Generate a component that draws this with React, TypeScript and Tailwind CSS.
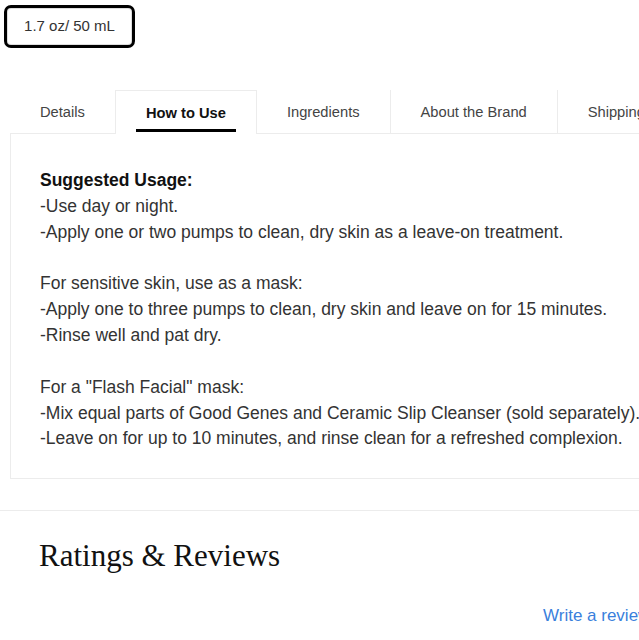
import React from "react";

const tabs = ["Details", "How to Use", "Ingredients", "About the Brand", "Shipping & Returns"];
const active = 1;

const blocks: { head: string; bold?: boolean; lines: string[] }[] = [
  {
    head: "Suggested Usage:",
    bold: true,
    lines: ["-Use day or night.", "-Apply one or two pumps to clean, dry skin as a leave-on treatment."],
  },
  {
    head: "For sensitive skin, use as a mask:",
    lines: ["-Apply one to three pumps to clean, dry skin and leave on for 15 minutes.", "-Rinse well and pat dry."],
  },
  {
    head: 'For a "Flash Facial" mask:',
    lines: [
      "-Mix equal parts of Good Genes and Ceramic Slip Cleanser (sold separately).",
      "-Leave on for up to 10 minutes, and rinse clean for a refreshed complexion.",
    ],
  },
];

export default function App() {
  return (
    <div className="w-[639px] h-[640px] overflow-hidden bg-white font-['Liberation_Sans',Arial,sans-serif] text-[#333]">
      <div className="w-[800px]">
        <div className="pl-[4px] pt-[5px]">
          <button className="h-[43px] w-[131px] rounded-[7px] border-[3px] border-black bg-white text-[15px] text-[#333] shadow-[inset_0_0_0_1px_#ddd]">
            1.7 oz/ 50 mL
          </button>
        </div>

        <div className="ml-[10px] mt-[42px] w-[760px]">
          <div className="flex h-[44px]">
            {tabs.map((t, i) => (
              <div
                key={t}
                className={
                  i === active
                    ? "relative flex items-center border-x border-t border-[#ececec] bg-white px-[30px] pt-[2px] text-[14.7px] font-bold text-[#111]"
                    : i === 0 || i === active + 1
                    ? "flex items-center border-b border-[#ececec] px-[30px] pt-[2px] text-[14.7px] text-[#444]"
                    : "flex items-center border-b border-l border-[#ececec] px-[30px] pt-[2px] text-[14.7px] text-[#444]"
                }
              >
                <span className="whitespace-nowrap">{t}</span>
                {i === active && (
                  <span className="absolute bottom-[2px] left-[20px] right-[20px] h-[3px] bg-black" />
                )}
              </div>
            ))}
            <div className="flex-1 border-b border-[#ececec]" />
          </div>

          <div className="h-[345px] border-x border-b border-[#ececec] pl-[29px] pt-[34px] text-[17.5px] leading-[25.8px]">
            {blocks.map((b, i) => (
              <div key={i} className={i > 0 ? "mt-[26px]" : ""}>
                <div className={b.bold ? "font-bold text-[#111]" : ""}>{b.head}</div>
                {b.lines.map((l) => (
                  <div key={l} className="whitespace-nowrap">
                    {l}
                  </div>
                ))}
              </div>
            ))}
          </div>
        </div>

        <div className="mt-[31px] border-t border-[#ececec]">
          <h2 className="pl-[39px] pt-[27px] font-['Liberation_Serif',Georgia,serif] text-[31px] leading-[36px] text-[#111]">
            Ratings &amp; Reviews
          </h2>
          <div className="mt-[29px] w-[639px] pl-[543px] text-[17px] text-[#3a7fdc] whitespace-nowrap">
            Write a review
          </div>
        </div>
      </div>
    </div>
  );
}
